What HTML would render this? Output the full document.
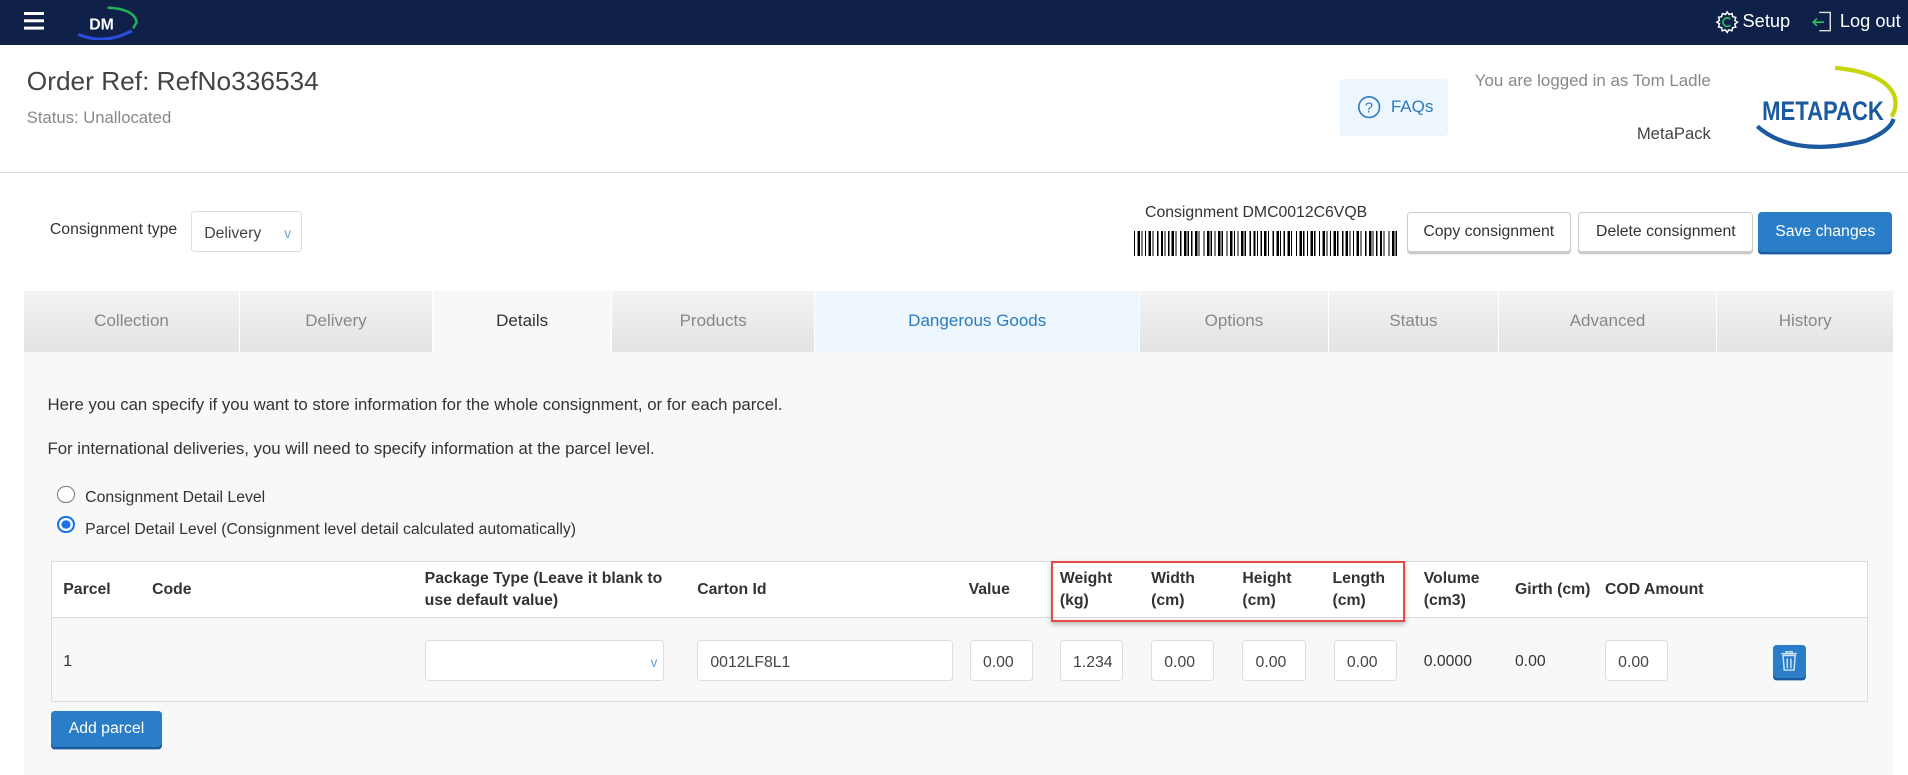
<!DOCTYPE html>
<html><head><meta charset="utf-8">
<style>
html,body{margin:0;padding:0;}
body{width:1568px;height:637px;zoom:1.21684;overflow:hidden;background:#fff;font-family:"Liberation Sans",Arial,sans-serif;color:#333;position:relative;font-size:13px;}
.a{position:absolute;white-space:nowrap;}
.nav{left:0;top:0;width:1568px;height:37px;background:#0f2149;}
.tab{position:absolute;top:239px;height:50px;line-height:50px;text-align:center;font-size:14px;color:#888;background:linear-gradient(#f3f3f3,#e3e3e3);border-right:1px solid #fff;box-sizing:border-box;}
.inp{position:absolute;background:#fff;border:1px solid #ddd;border-radius:3px;box-sizing:border-box;height:34px;line-height:36px;padding-left:10px;font-size:13px;color:#444;}
.th{position:absolute;font-weight:bold;font-size:13px;color:#333;line-height:18px;}
.btn{position:absolute;border:1px solid #ccc;border-radius:3px;background:#fff;box-shadow:0 2px 0 #ccc;text-align:center;font-size:13px;color:#333;box-sizing:border-box;}
</style></head><body>
<div class="a nav"></div>
<div class="a" style="left:20px;top:10px;width:16px;height:2.5px;background:#fff;box-shadow:0 6px 0 #fff,0 12px 0 #fff"></div>
<svg class="a" style="left:58px;top:3px" width="58" height="30"><path d="M6 25 Q28 34 50 22" stroke="#2a4de0" stroke-width="2.5" fill="none"/><path d="M30 3 Q52 4 54 15 L51 20" stroke="#1fb45a" stroke-width="2" fill="none"/><text x="15" y="21" fill="#fff" font-family="Liberation Sans" font-size="13" font-weight="bold">DM</text></svg>
<svg class="a" style="left:1409px;top:8px" width="20" height="20" viewBox="0 0 20 20"><path d="M10 1.5l1.5 2.2 2.6-.8.4 2.6 2.6.6-.8 2.6 2.2 1.3-2.2 1.5.8 2.6-2.6.4-.6 2.6-2.6-.8L10 18.5l-1.5-2.2-2.6.8-.4-2.6-2.6-.6.8-2.6L1.5 10l2.2-1.5-.8-2.6 2.6-.4.6-2.6 2.6.8z" fill="none" stroke="#fff" stroke-width="1.2"/><path d="M12.5 7.5 A3.5 3.5 0 1 0 12.5 12.5" fill="none" stroke="#22c55e" stroke-width="1.4"/></svg>
<div class="a" style="left:1432px;top:8px;color:#fff;font-size:15px">Setup</div>
<svg class="a" style="left:1489px;top:8px" width="18" height="20"><path d="M6 2h9v15H6" fill="none" stroke="#ddd" stroke-width="1.2"/><path d="M1 10h9M4 7L1 10l3 3" fill="none" stroke="#22c55e" stroke-width="1.3"/></svg>
<div class="a" style="left:1512px;top:8px;color:#fff;font-size:15px">Log out</div>

<div class="a" style="left:22px;top:54px;font-size:21.6px;color:#444">Order Ref: RefNo336534</div>
<div class="a" style="left:22px;top:89px;font-size:13.7px;color:#888">Status: Unallocated</div>
<div class="a" style="left:1101px;top:65px;width:89px;height:47px;background:#eef6fd;border-radius:3px"></div>
<svg class="a" style="left:1115px;top:78px" width="20" height="20"><circle cx="10" cy="10" r="8.5" fill="none" stroke="#2a7bc0" stroke-width="1.3"/><text x="6.5" y="14.5" fill="#2a7bc0" font-size="12" font-family="Liberation Sans">?</text></svg>
<div class="a" style="left:1143px;top:80px;font-size:14px;color:#2a7bc0">FAQs</div>
<div class="a" style="left:1212px;top:58px;font-size:13.9px;color:#888">You are logged in as Tom Ladle</div>
<div class="a" style="right:162px;top:102px;font-size:13.7px;color:#444">MetaPack</div>
<svg class="a" style="left:1438px;top:52px" width="125" height="72"><path d="M6 52 Q35 78 95 64 Q115 56 118 46" stroke="#1b5a9e" stroke-width="3.5" fill="none"/><path d="M70 4 Q112 8 119 28 Q121 38 116 44" stroke="#c8d40a" stroke-width="3.5" fill="none"/><text x="10" y="47" fill="#1b5a9e" font-size="22" font-weight="bold" font-family="Liberation Sans" textLength="100" lengthAdjust="spacingAndGlyphs">METAPACK</text></svg>
<div class="a" style="left:0;top:141px;width:1568px;height:1px;background:#ddd"></div>

<div class="a" style="left:41px;top:182px;font-size:13px">Consignment type</div>
<div class="inp" style="left:157px;top:173px;width:91px">Delivery<span style="position:absolute;right:8px;color:#6a9fd4;font-size:11px">v</span></div>
<div class="a" style="left:941px;top:168px;font-size:13px">Consignment DMC0012C6VQB</div>
<div class="a" style="left:932px;top:190px;width:218px;height:20px;background:repeating-linear-gradient(90deg,#000 0 1px,#fff 1px 3px,#000 3px 5px,#fff 5px 6px,#000 6px 7px,#fff 7px 9px,#000 9px 10px,#fff 10px 12px,#000 12px 14px,#fff 14px 15px,#000 15px 16px,#fff 16px 19px)"></div>
<div class="btn" style="left:1156px;top:174px;width:135px;height:33px;line-height:31px">Copy consignment</div>
<div class="btn" style="left:1297px;top:174px;width:144px;height:33px;line-height:31px">Delete consignment</div>
<div class="btn" style="left:1445px;top:174px;width:110px;height:33px;line-height:31px;background:#2a7dc7;border-color:#2a7dc7;color:#fff;box-shadow:0 2px 0 #1b5a9e">Save changes</div>

<div class="tab" style="left:20px;width:177px">Collection</div>
<div class="tab" style="left:197px;width:159px">Delivery</div>
<div class="tab" style="left:356px;width:147px;background:#f8f8f8;color:#333">Details</div>
<div class="tab" style="left:503px;width:167px">Products</div>
<div class="tab" style="left:670px;width:267px;background:#eef6fd;color:#2a7bc0">Dangerous Goods</div>
<div class="tab" style="left:937px;width:155px">Options</div>
<div class="tab" style="left:1092px;width:140px">Status</div>
<div class="tab" style="left:1232px;width:179px">Advanced</div>
<div class="tab" style="left:1411px;width:145px;border:none">History</div>
<div class="a" style="left:20px;top:289px;width:1536px;height:348px;background:#f8f8f8"></div>

<div class="a" style="left:39px;top:325px;font-size:13.8px">Here you can specify if you want to store information for the whole consignment, or for each parcel.</div>
<div class="a" style="left:39px;top:361px;font-size:13.8px">For international deliveries, you will need to specify information at the parcel level.</div>
<div class="a" style="left:47px;top:399px;width:13px;height:13px;border:1px solid #777;border-radius:50%;background:#fff"></div>
<div class="a" style="left:70px;top:402px;font-size:13px">Consignment Detail Level</div>
<div class="a" style="left:47px;top:424px;width:11px;height:11px;border:2px solid #1a73e8;border-radius:50%;background:#1a73e8;box-shadow:inset 0 0 0 2px #fff"></div>
<div class="a" style="left:70px;top:428px;font-size:13px">Parcel Detail Level (Consignment level detail calculated automatically)</div>

<div class="a" style="left:42px;top:461px;width:1493px;height:116px;border:1px solid #ddd;box-sizing:border-box;background:#f8f8f8"></div>
<div class="a" style="left:43px;top:462px;width:1491px;height:45px;background:#fff;border-bottom:1px solid #ddd"></div>
<div class="th" style="left:52px;top:476px">Parcel</div>
<div class="th" style="left:125px;top:476px">Code</div>
<div class="th" style="left:349px;top:467px">Package Type (Leave it blank to<br>use default value)</div>
<div class="th" style="left:573px;top:476px">Carton Id</div>
<div class="th" style="left:796px;top:476px">Value</div>
<div class="th" style="left:871px;top:467px">Weight<br>(kg)</div>
<div class="th" style="left:946px;top:467px">Width<br>(cm)</div>
<div class="th" style="left:1021px;top:467px">Height<br>(cm)</div>
<div class="th" style="left:1095px;top:467px">Length<br>(cm)</div>
<div class="th" style="left:1170px;top:467px">Volume<br>(cm3)</div>
<div class="th" style="left:1245px;top:476px">Girth (cm)</div>
<div class="th" style="left:1319px;top:476px">COD Amount</div>
<div class="a" style="left:864px;top:461px;width:291px;height:50px;border:2px solid #e84a4a;box-sizing:border-box;box-shadow:0 2px 4px rgba(0,0,0,.25)"></div>

<div class="a" style="left:52px;top:537px">1</div>
<div class="inp" style="left:349px;top:526px;width:197px"><span style="position:absolute;right:5px;color:#6a9fd4;font-size:11px">v</span></div>
<div class="inp" style="left:573px;top:526px;width:210px">0012LF8L1</div>
<div class="inp" style="left:797px;top:526px;width:52px">0.00</div>
<div class="inp" style="left:871px;top:526px;width:52px">1.234</div>
<div class="inp" style="left:946px;top:526px;width:52px">0.00</div>
<div class="inp" style="left:1021px;top:526px;width:52px">0.00</div>
<div class="inp" style="left:1096px;top:526px;width:52px">0.00</div>
<div class="a" style="left:1170px;top:537px">0.0000</div>
<div class="a" style="left:1245px;top:537px">0.00</div>
<div class="inp" style="left:1319px;top:526px;width:52px">0.00</div>
<div class="a" style="left:1457px;top:530px;width:27px;height:27px;background:#2a7dc7;border-radius:3px;box-shadow:0 2px 0 #1b5a9e"></div>
<svg class="a" style="left:1463px;top:534px" width="15" height="19"><path d="M1 3h13M5 3V1.5h5V3M2.5 4.5h10l-1 12h-8z M6 7v8M9 7v8" fill="none" stroke="#cfe3f5" stroke-width="1.2"/></svg>

<div class="a" style="left:42px;top:584px;width:91px;height:30px;line-height:29px;background:#2a7dc7;border-radius:3px;color:#fff;text-align:center;box-shadow:0 2px 0 #1b5a9e">Add parcel</div>
</body></html>
